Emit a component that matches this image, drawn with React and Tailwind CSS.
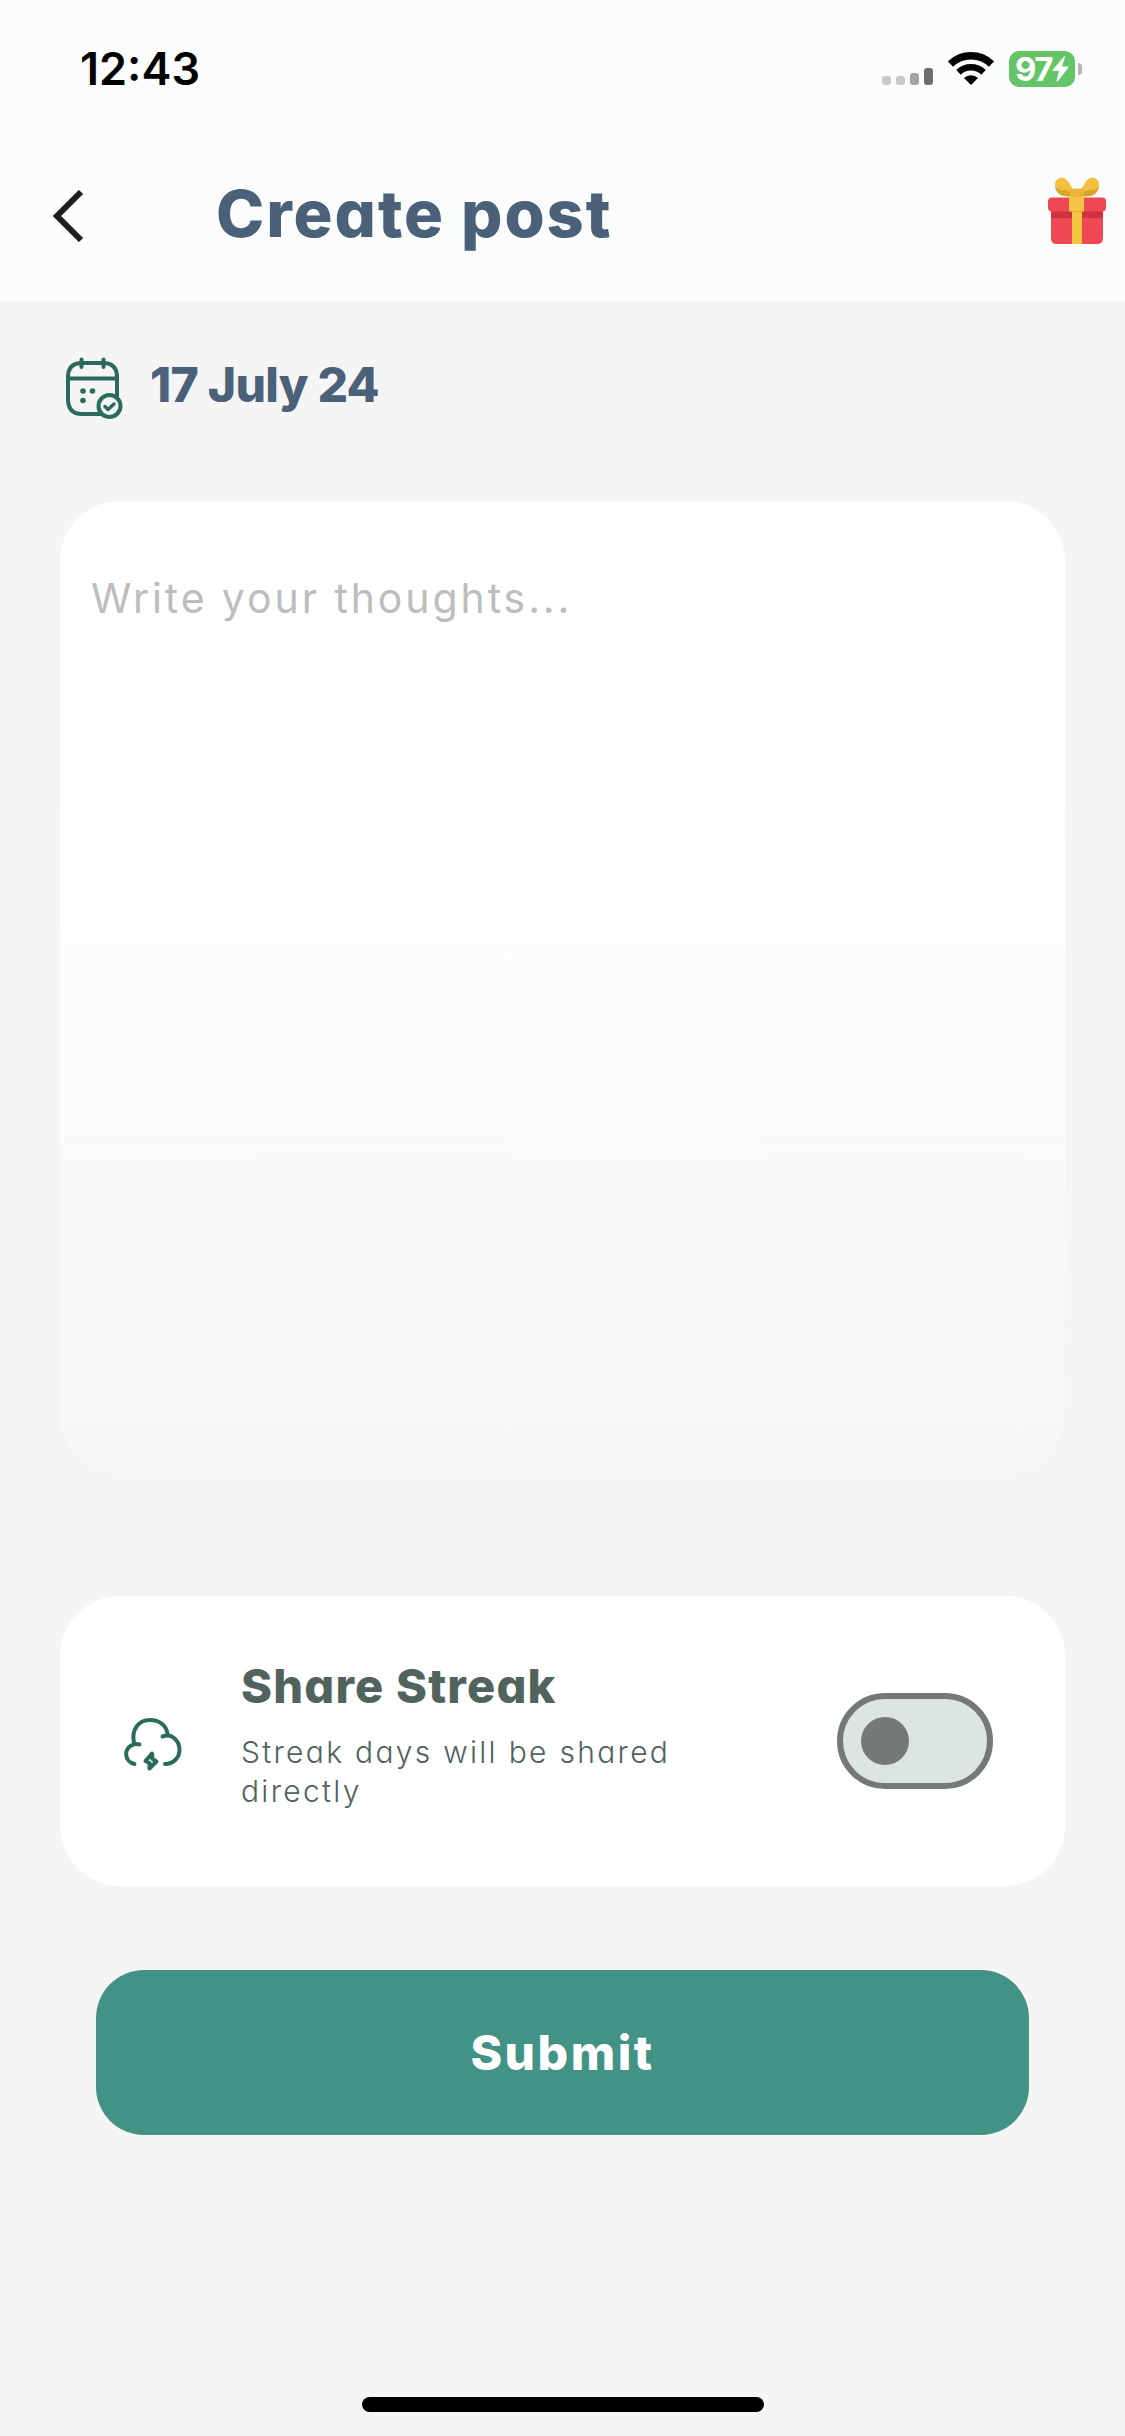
import React, { useState } from 'react';

const StatusBar = () => (
  <div className="flex justify-between items-start h-[138px] pl-[80px] pr-[43px]">
    <div className="mt-[42px] text-[45px] leading-[54px] font-semibold text-black">12:43</div>
    <div className="flex items-end gap-[15px] h-[36px] mt-[51px]">
      <div className="flex items-end gap-[5px] mb-[2px]">
        <span className="w-[9px] h-[9px] rounded-[3px] bg-[#c8caca]" />
        <span className="w-[9px] h-[9px] rounded-[3px] bg-[#c8caca]" />
        <span className="w-[9px] h-[12px] rounded-[3px] bg-[#a3a5a5]" />
        <span className="w-[9px] h-[17px] rounded-[3px] bg-[#6d6f6f]" />
      </div>
      <svg className="w-[46px] h-[34px] mb-[2px]" viewBox="0 0 46 34" fill="none" stroke="#000">
        <path d="M2.500 13 A29.500 29.500 0 0 1 43.500 13" strokeWidth="7.500" />
        <path d="M10.500 21.300 A18 18 0 0 1 35.500 21.300" strokeWidth="6.500" />
        <path d="M23 34 L16 27 A10 10 0 0 1 30 27 Z" fill="#000" stroke="none" />
      </svg>
      <div className="flex items-center gap-[3px]">
        <div className="flex items-center w-[66px] h-[36px] pl-[6px] rounded-[10px] bg-[#65c466]">
          <span className="text-[33px] leading-[36px] font-bold tracking-[-1.500px] text-white">97</span>
          <svg className="shrink-0 w-[17px] h-[26px]" viewBox="0 0 17 26" fill="#fff">
            <path d="M12 0.500 L0.500 14 Q0.300 15 1.500 15 H7 L4.500 25 Q5 26 6 25 L16.500 11.500 Q16.500 10.500 15.500 10.500 H10 L13 1 Q13 0 12 0.500 Z" />
          </svg>
        </div>
        <span className="w-[4px] h-[12px] rounded-r-full bg-[#b4b4ba]" />
      </div>
    </div>
  </div>
);

const GiftIcon = () => (
  <svg className="w-[58px] h-[68px]" viewBox="0 0 58 68">
    <path d="M3 32 H55 V61 Q55 67 49 67 H9 Q3 67 3 61 Z" fill="#ee4853" />
    <path d="M3 34 H55 V41 H3 Z" fill="#cf323e" />
    <rect x="24" y="34" width="10" height="33" fill="#f5c442" />
    <rect x="0" y="20.500" width="58" height="14" rx="4" fill="#ee4853" />
    <path d="M23 17 H36 V34.500 H21 V20 Z" fill="#f5c442" />
    <path d="M23 19 Q9 21 7 10 Q6 2 13 0.500 Q19 0 24 11 Z" fill="#f3c13f" />
    <path d="M35 19 Q49 21 51 10 Q52 2 45 0.500 Q39 0 34 11 Z" fill="#f3c13f" />
    <path d="M7 9 Q10 14 17 13 L23 15 V19 Q9 21 7 9 Z M51 9 Q48 14 41 13 L35 15 V19 Q49 21 51 9 Z" fill="#d6a52d" />
    <rect x="22" y="11.500" width="14" height="8.500" rx="3" fill="#eab53a" />
  </svg>
);

const CalendarIcon = () => (
  <svg className="w-[58px] h-[64px]" viewBox="0 0 58 64" fill="none" stroke="#2b6b5c" strokeLinecap="round" strokeLinejoin="round">
    <path d="M52 40 V21 Q52 7 38 7 H17 Q3 7 3 21 V43 Q3 58 17 58 H38" strokeWidth="4" />
    <path d="M3 22.500 H52 M16.500 3.500 V11 M38.500 3.500 V11" strokeWidth="4" />
    <circle cx="44.500" cy="50" r="11" strokeWidth="4" fill="#f5f5f5" />
    <path d="M40 50.500 L43 53.500 L49 48" strokeWidth="3.500" />
    <g fill="#2b6b5c" stroke="none">
      <circle cx="18" cy="35" r="2.800" />
      <circle cx="27.500" cy="35" r="2.800" />
      <circle cx="18" cy="44.500" r="2.800" />
    </g>
  </svg>
);

const CloudBoltIcon = () => (
  <svg className="w-[60px] h-[54px] mt-[6px]" viewBox="0 0 60 54" fill="none" stroke="#2b6b5c" strokeWidth="4" strokeLinecap="round" strokeLinejoin="round">
    <path d="M12.500 47 A10 10 0 0 1 11.500 27.500 Q14 26.500 17.500 27.500" />
    <path d="M12 26 C9 12 17 3 28 3 C38 3 45.500 9 45.500 18.500" />
    <path d="M40.500 19.500 C50 16 57.500 24 57.500 33 C57.500 41 51 47 43 47" />
    <path d="M30 36.500 L23.500 44 L27.500 46 L27.500 51.500 L34.500 44.500 L30.500 42 Z" />
  </svg>
);

const App = () => {
  const [shared, setShared] = useState(false);

  return (
    <div className="flex flex-col w-[1125px] h-[2436px] bg-[#f5f5f5] font-['Inter',sans-serif] [font-feature-settings:'cv11']">
      <header className="h-[301px] bg-[#fbfdfc]">
        <StatusBar />
        <div className="flex items-center pl-[52px] pr-[19px]">
          <svg className="w-[32px] h-[52px] mt-[4px]" viewBox="0 0 32 52" fill="none" stroke="#1c1f1d" strokeWidth="6">
            <path d="M29 2 L5 26 L29 50" />
          </svg>
          <h1 className="ml-[132px] text-[65px] leading-[152px] font-extrabold tracking-[1.900px] text-[#4b6079]">Create post</h1>
          <div className="ml-auto -mt-[6px]"><GiftIcon /></div>
        </div>
      </header>

      <div className="flex items-center h-[64px] mt-[55px] pl-[65px] gap-[27px]">
        <CalendarIcon />
        <span className="-mt-[6px] text-[48px] leading-[58px] font-extrabold tracking-[-0.700px] text-[#4b6079]">17 July 24</span>
      </div>

      <textarea
        className="block shrink-0 w-[1005px] h-[973px] mx-[60px] mt-[81px] pt-[69px] px-[31px] rounded-[60px] resize-none outline-none bg-linear-to-b from-white from-20% to-[#f7f7f7] text-[41px] leading-[56px] tracking-[2.900px] placeholder:text-[#bdbdbd]"
        placeholder="Write your thoughts..."
      />

      <section className="flex shrink-0 items-center w-[1005px] h-[290px] mx-[60px] mt-[122px] pl-[62px] pr-[72px] rounded-[60px] bg-white">
        <CloudBoltIcon />
        <div className="w-[460px] ml-[59px] -mt-[15px] text-[#50635d]">
          <h2 className="text-[47px] leading-[60px] font-extrabold tracking-[1.200px] whitespace-nowrap">Share Streak</h2>
          <p className="mt-[17px] text-[30px] leading-[39px] font-light tracking-[2.300px]">Streak days will be shared directly</p>
        </div>
        <button
          onClick={() => setShared(!shared)}
          className={`flex items-center w-[156px] h-[96px] ml-auto px-[18px] rounded-full border-[6px] border-[#737977] bg-[#dde5e2] ${shared ? 'justify-end' : 'justify-start'}`}
        >
          <span className="w-[48px] h-[48px] rounded-full bg-[#737977]" />
        </button>
      </section>

      <button className="shrink-0 h-[165px] mx-[96px] mt-[84px] rounded-[48px] bg-[#429286] text-[48px] font-extrabold tracking-[2.500px] text-white">
        Submit
      </button>

      <div className="w-[402px] h-[15px] mt-auto mb-[24px] mx-auto rounded-full bg-black" />
    </div>
  );
};

export default App;
